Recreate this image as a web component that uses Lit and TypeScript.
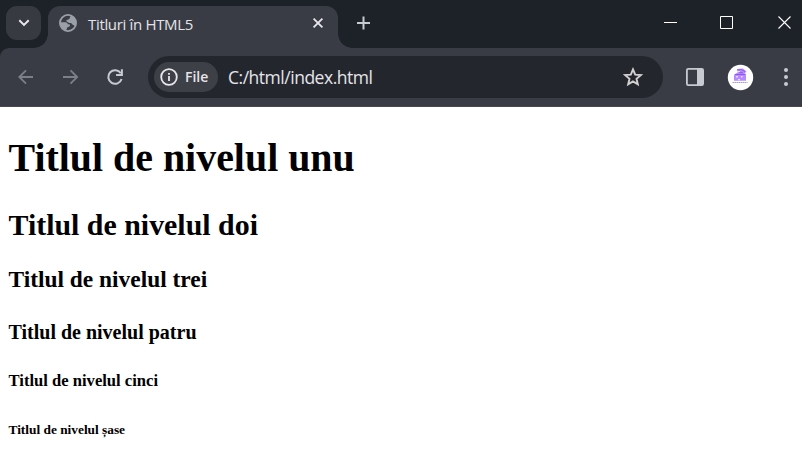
import { LitElement, html, css } from "lit";
import { customElement } from "lit/decorators.js";

@customElement("browser-tabs")
class BrowserTabs extends LitElement {
  static styles = css`
    :host { display: flex; height: 48px; background: #1d2128; position: relative; }
    svg { display: block; flex: none; }
    .search { width: 35px; height: 34px; margin: 6px 0 0 6px; border-radius: 11px; background: #383a42; display: grid; place-items: center; }
    .tab { box-sizing: border-box; position: relative; width: 290px; height: 42px; margin: 6px 0 0 7px; padding: 0 14px 8px 11px; border-radius: 12px 12px 0 0; background: #3a3c45; display: flex; align-items: center; }
    .tab::before, .tab::after { content: ""; position: absolute; bottom: 0; width: 14px; height: 14px; }
    .tab::before { left: -14px; background: radial-gradient(circle at 0 0, transparent 13.5px, #3a3c45 14px); }
    .tab::after { right: -14px; background: radial-gradient(circle at 100% 0, transparent 13.5px, #3a3c45 14px); }
    .title { flex: 1; margin-left: 11px; font: 15px "Open Sans", sans-serif; letter-spacing: -0.33px; color: #e4e4e8; white-space: nowrap; padding-top: 1px; }
    .plus { margin: 16px 0 0 18px; }
    .window { margin: 15px 10px 0 auto; display: flex; }
    .max { margin: 0 43px 0 41px; }
  `;
  render() {
    return html`
      <div class="search"><svg width="12" height="8" viewBox="0 0 12 8" fill="none" stroke="#e8e8ec" stroke-width="2"><path d="M1.3 1.2 6 5.9l4.7-4.7" /></svg></div>
      <div class="tab">
        <svg width="18" height="18" viewBox="0 0 18 18"><circle cx="9" cy="9" r="8.1" fill="none" stroke="#9b9fa8" stroke-width="1.8" /><path fill="#9b9fa8" d="M10.8 1.1C15 1.7 17 5.2 17 8.8c0 1.5-.5 2.8-1.2 3.8-.6-1-.9-1.8-2.2-1.8-.5-1.3-1.3-1.8-2.7-1.8-1.1 0-1.5-.6-2.3-1.1-1.5-.7-1.8-1.6-.3-2.2 1.3-.3 2.2-.5 2.3-1.5.1-.8.9-.9.8-1.7ZM1.2 8.3h5c1.7 0 2.5.8 2.5 2h1.7c1 .4.7 2-.4 2.5-.8.3-1.7.2-1.8 1-.2 1-.5 2.1-1.5 2.6C3.2 15 1 12.2 1.2 8.3Z" /></svg>
        <span class="title">Titluri în HTML5</span>
        <svg width="12" height="12" viewBox="0 0 12 12" stroke="#e8e8ec" stroke-width="1.8"><path d="m1.6 1.6 8.8 8.8m0-8.8-8.8 8.8" /></svg>
      </div>
      <svg class="plus" width="14" height="14" viewBox="0 0 14 14" stroke="#c7cad1" stroke-width="2"><path d="M7.5 .5v13M1 7h13" /></svg>
      <div class="window">
        <svg width="15" height="15" viewBox="0 0 15 15" stroke="#fff"><path d="M1 7.5h13" /></svg>
        <svg class="max" width="15" height="15" viewBox="0 0 15 15" fill="none" stroke="#fff"><path d="M1.5 1.5h12v12h-12z" /></svg>
        <svg width="15" height="15" viewBox="0 0 15 15" stroke="#fff" stroke-width="1.1"><path d="m1.5 1.5 12 12m0-12-12 12" /></svg>
      </div>`;
  }
}

@customElement("browser-toolbar")
class BrowserToolbar extends LitElement {
  static styles = css`
    :host { display: block; background: #1d2128; }
    .bar { box-sizing: border-box; display: flex; align-items: center; height: 59px; padding: 0 10px 0 17px; background: #3a3c45; border-bottom: 1px solid #46484e; border-radius: 9px 0 0 0; }
    svg { display: block; flex: none; }
    .nav { display: flex; gap: 27px; }
    .reload { margin-left: -1px; }
    .address { box-sizing: border-box; display: flex; align-items: center; width: 515px; height: 42px; margin-left: 24px; padding: 0 20px 0 6px; border-radius: 21px; background: #24262e; }
    .chip { box-sizing: border-box; display: flex; align-items: center; gap: 7px; width: 64px; height: 30px; padding-left: 6px; border-radius: 15px; background: #3e4047; color: #e5e5e9; font: 600 14px "Open Sans", sans-serif; letter-spacing: 0; }
    .chip span { padding-bottom: 1px; }
    .url { flex: 1; margin-left: 10px; color: #e5e5e9; font: 17.5px "Open Sans", sans-serif; letter-spacing: -0.48px; padding-bottom: 1px; white-space: nowrap; }
    .panel { margin-left: 23px; }
    .avatar { margin-left: 23px; }
    .menu { margin-left: auto; }
  `;
  render() {
    return html`<div class="bar">
      <div class="nav">
        <svg width="18" height="18" viewBox="0 0 18 18" fill="none" stroke="#7d7f86" stroke-width="1.8"><path d="M16 9H2.5M9 2.3 2.3 9 9 15.7" /></svg>
        <svg width="18" height="18" viewBox="0 0 18 18" fill="none" stroke="#7d7f86" stroke-width="1.8"><path d="M1 9h13.5M8.5 2.3 15.2 9l-6.7 6.7" /></svg>
        <svg class="reload" width="18" height="18" viewBox="0 0 18 18" fill="none" stroke="#c7cad1" stroke-width="2"><path d="M15.6 11A6.8 6.8 0 1 1 14.8 5.3M15.9 1.3v5.8h-5.8" /></svg>
      </div>
      <div class="address">
        <div class="chip">
          <svg width="18" height="18" viewBox="0 0 18 18"><circle cx="9" cy="9" r="7.8" fill="none" stroke="#e8e8ec" stroke-width="1.8" /><path fill="#e8e8ec" d="M8.1 8h1.8v5H8.1zM8.1 5h1.8v1.8H8.1z" /></svg>
          <span>File</span>
        </div>
        <span class="url">C:/html/index.html</span>
        <svg width="20" height="20" viewBox="0 0 20 20" fill="none" stroke="#d2d1d0" stroke-width="1.9"><path d="m10 2.4 2.2 5.2 5.6.5-4.3 3.7 1.3 5.5-4.8-2.9-4.8 2.9 1.3-5.5-4.3-3.7 5.6-.5Z" /></svg>
      </div>
      <svg class="panel" width="18" height="18" viewBox="0 0 18 18"><rect x=".9" y=".9" width="16.2" height="16.2" rx="1.3" fill="none" stroke="#c7cad1" stroke-width="1.8" /><path fill="#c7cad1" d="M11 1h6v16h-6z" /></svg>
      <svg class="avatar" width="27" height="27" viewBox="0 0 27 27">
        <circle cx="13.5" cy="13.5" r="12.7" fill="#fff" />
        <path fill="#b88cff" d="m10 5 6-.5 3.5 3-2 2.2H19v7H7v-6l4-2.5Z" />
        <path stroke="#8f5aec" fill="none" d="m10 6 4-.5 4 2M8 10.5h10M12 8l4 1" />
        <path fill="#e7dbff" d="M9 12h2v1.5H9zM14 12h1.5v1.5H14zM11 15h2v1.2h-2zM10 7h3v1h-3z" />
        <path stroke="#8d86a9" stroke-width=".8" stroke-dasharray="1.5 .5" d="M5.5 18.5h15" />
      </svg>
      <svg class="menu" width="12" height="18" viewBox="0 0 12 18" fill="#c7cad1"><circle cx="6" cy="2" r="2" /><circle cx="6" cy="9" r="2" /><circle cx="6" cy="16" r="2" /></svg>
    </div>`;
  }
}

@customElement("app-root")
class AppRoot extends LitElement {
  static styles = css`
    :host { display: block; height: 450px; overflow: hidden; background: #fff; }
    .page { padding: 29px 8.5px 0; color: #000; font-family: "Liberation Serif", "Times New Roman", serif; }
    h1, h2, h3, h4, h5, h6 { margin: 0; font-weight: 700; white-space: nowrap; }
    h1 { font-size: 39.9px; line-height: 44px; }
    h2 { font-size: 29.9px; line-height: 34px; margin-top: 28px; }
    h3 { font-size: 23.4px; line-height: 26px; margin-top: 24px; }
    h4 { font-size: 20px; line-height: 22px; margin-top: 29px; }
    h5 { font-size: 16.6px; line-height: 18px; margin-top: 29px; }
    h6 { font-size: 13.35px; line-height: 14px; margin-top: 33px; }
  `;
  render() {
    return html`
      <browser-tabs></browser-tabs>
      <browser-toolbar></browser-toolbar>
      <main class="page">
        <h1>Titlul de nivelul unu</h1>
        <h2>Titlul de nivelul doi</h2>
        <h3>Titlul de nivelul trei</h3>
        <h4>Titlul de nivelul patru</h4>
        <h5>Titlul de nivelul cinci</h5>
        <h6>Titlul de nivelul șase</h6>
      </main>`;
  }
}
